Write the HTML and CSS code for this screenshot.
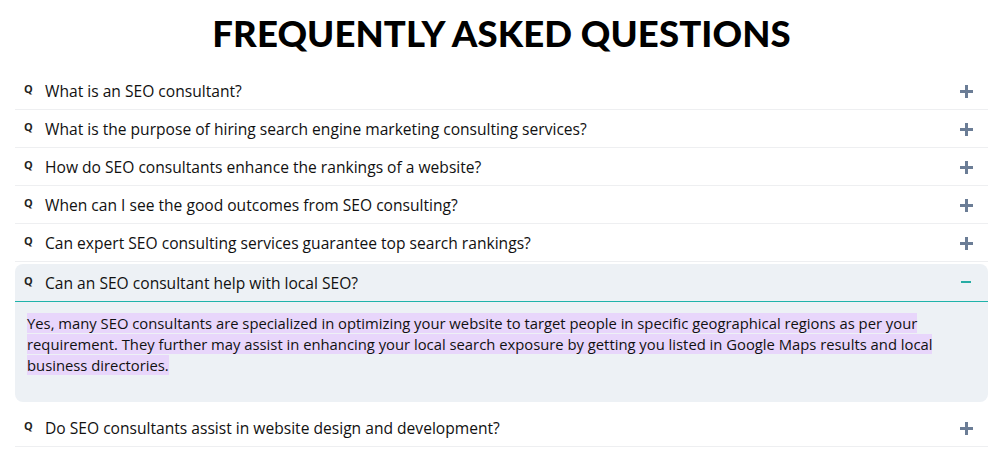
FILE: index.html
```html
<!DOCTYPE html>
<html lang="en">
<head>
<meta charset="utf-8">
<link rel="stylesheet" href="styles.css">
</head>
<body>
<section class="faq">
  <h1 class="faq-title">FREQUENTLY ASKED QUESTIONS</h1>
  <div class="faq-list">
    <div class="faq-item">
      <div class="faq-q"><span class="q-mark">Q</span><span class="q-text">What is an SEO consultant?</span><span class="toggle plus"></span></div>
    </div>
    <div class="faq-item">
      <div class="faq-q"><span class="q-mark">Q</span><span class="q-text">What is the purpose of hiring search engine marketing consulting services?</span><span class="toggle plus"></span></div>
    </div>
    <div class="faq-item">
      <div class="faq-q"><span class="q-mark">Q</span><span class="q-text">How do SEO consultants enhance the rankings of a website?</span><span class="toggle plus"></span></div>
    </div>
    <div class="faq-item">
      <div class="faq-q"><span class="q-mark">Q</span><span class="q-text">When can I see the good outcomes from SEO consulting?</span><span class="toggle plus"></span></div>
    </div>
    <div class="faq-item">
      <div class="faq-q"><span class="q-mark">Q</span><span class="q-text">Can expert SEO consulting services guarantee top search rankings?</span><span class="toggle plus"></span></div>
    </div>
    <div class="faq-item open">
      <div class="faq-q"><span class="q-mark">Q</span><span class="q-text">Can an SEO consultant help with local SEO?</span><span class="toggle minus"></span></div>
      <div class="faq-a"><p><mark>Yes, many SEO consultants are specialized in optimizing your website to target people in specific geographical regions as per your requirement. They further may assist in enhancing your local search exposure by getting you listed in Google Maps results and local business directories.</mark></p></div>
    </div>
    <div class="faq-item">
      <div class="faq-q"><span class="q-mark">Q</span><span class="q-text">Do SEO consultants assist in website design and development?</span><span class="toggle plus"></span></div>
    </div>
  </div>
</section>
</body>
</html>
```
FILE: styles.css
```css
* { box-sizing: border-box; }
html, body { margin: 0; padding: 0; background: #fff; }
body { font-family: "Open Sans", "Liberation Sans", sans-serif; color: #111; }

.faq { padding: 0 12px 0 15px; }

.faq-title {
  margin: 0;
  height: 72px;
  padding-top: 8px;
  text-align: center;
  font-family: Lato, sans-serif;
  font-weight: 900;
  font-size: 36.5px;
  letter-spacing: 0.1px;
  color: #000;
  line-height: 50px;
}

.faq-list { display: flex; flex-direction: column; }

.faq-item { border-bottom: 1px solid #eeeff1; }

.faq-q {
  display: flex;
  align-items: center;
  height: 37px;
  padding: 0 14px 0 9px;
}

.q-mark {
  width: 21px;
  font-size: 11px;
  font-weight: 700;
  color: #222;
  align-self: flex-start;
  margin-top: 9px;
}

.q-text { flex: 1; font-size: 15.6px; font-weight: 500; color: #111; }

.toggle { position: relative; width: 14px; height: 14px; }
.toggle::before, .toggle::after {
  content: ""; position: absolute; background: #6b7d96;
}
.toggle.plus::before { left: 0; top: 6px; width: 13px; height: 3px; }
.toggle.plus::after { left: 5px; top: 1px; width: 3px; height: 13px; }
.toggle.minus::before { left: 1px; top: 5px; width: 10px; height: 2px; background: #27aca4; }
.toggle.minus::after { display: none; }

.faq-item.open {
  background: #edf1f5;
  border-radius: 8px;
  border-bottom: 0;
  margin-top: 2px;
  margin-bottom: 7px;
}
.faq-item.open .faq-q { border-bottom: 1px solid #1fb3aa; height: 38px; }

.faq-a { padding: 11px 12px 26px 12px; }
.faq-a p { margin: 0; font-size: 14.8px; line-height: 21px; color: #111; }
.faq-a mark { background: #e8d6fb; color: #111; }
```
